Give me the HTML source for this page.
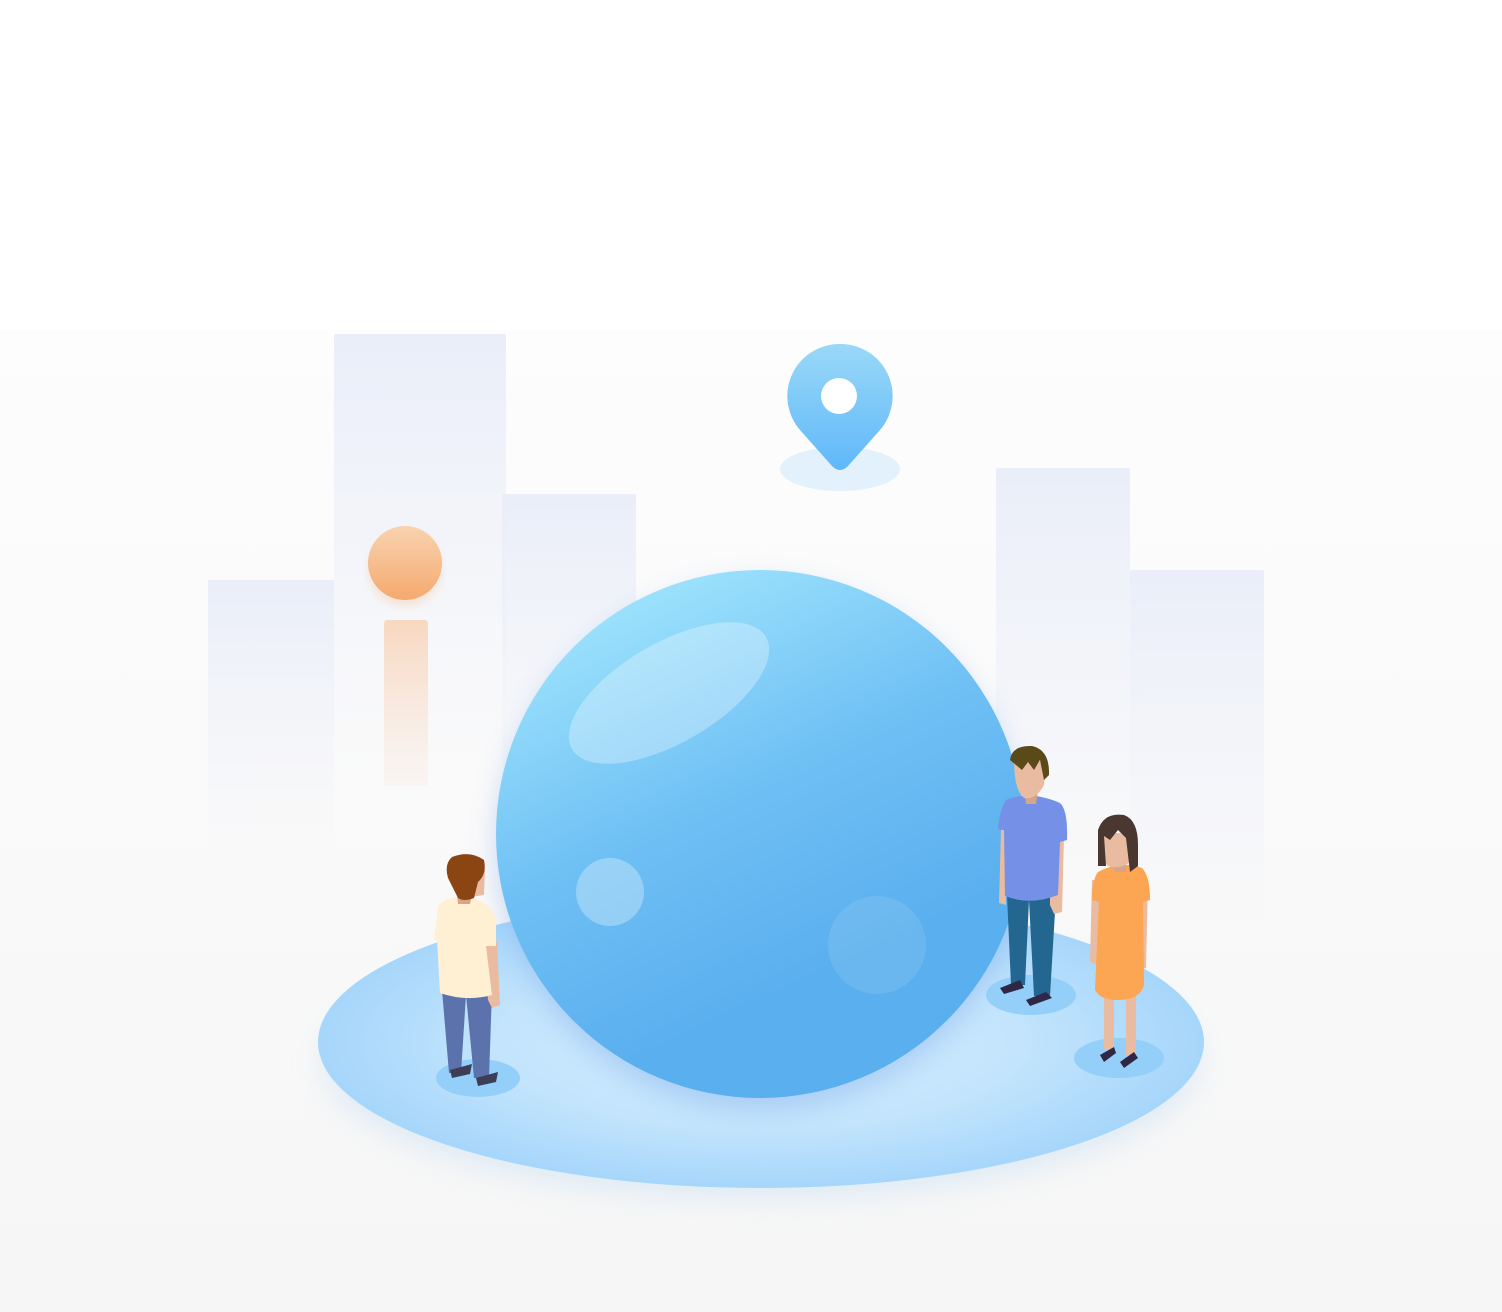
<!DOCTYPE html>
<html><head><meta charset="utf-8"><style>html,body{margin:0;padding:0;background:#fff}svg{display:block}</style></head><body>
<svg width="1502" height="1312" viewBox="0 0 1502 1312" xmlns="http://www.w3.org/2000/svg">
<defs>
<linearGradient id="bg" x1="0" y1="0" x2="0" y2="1"><stop offset="0" stop-color="#fdfdfd"/><stop offset="1" stop-color="#f6f6f6"/></linearGradient>
<linearGradient id="bld" x1="0" y1="0" x2="0" y2="1"><stop offset="0" stop-color="#eaeef9"/><stop offset="1" stop-color="#eef0f8" stop-opacity="0"/></linearGradient>
<linearGradient id="bar" x1="0" y1="0" x2="0" y2="1"><stop offset="0" stop-color="#f8d8c0"/><stop offset="1" stop-color="#f8e4d6" stop-opacity="0.2"/></linearGradient>
<linearGradient id="ob" x1="0" y1="0" x2="0" y2="1"><stop offset="0" stop-color="#f8d3b0"/><stop offset="1" stop-color="#f5a96e"/></linearGradient>
<linearGradient id="pin" x1="0" y1="0" x2="0" y2="1"><stop offset="0" stop-color="#9ad8f7"/><stop offset="1" stop-color="#5fb8fa"/></linearGradient>
<radialGradient id="plat" cx="0.5" cy="0.5" r="0.5"><stop offset="0" stop-color="#d2ecfd"/><stop offset="0.6" stop-color="#c2e4fc"/><stop offset="1" stop-color="#a6d6fb"/></radialGradient>
<linearGradient id="sph" x1="0.3" y1="0" x2="0.65" y2="0.75"><stop offset="0" stop-color="#9fe4fd"/><stop offset="0.55" stop-color="#6ebff4"/><stop offset="1" stop-color="#5aafee"/></linearGradient>
<filter id="blur" x="-20%" y="-20%" width="140%" height="140%"><feGaussianBlur stdDeviation="14"/></filter>
<filter id="blur2"><feGaussianBlur stdDeviation="6"/></filter>
</defs>
<rect x="0" y="330" width="1502" height="982" fill="url(#bg)"/>
<rect x="208" y="580" width="126" height="272" rx="2" fill="url(#bld)"/>
<rect x="334" y="334" width="172" height="450" rx="2" fill="url(#bld)"/>
<rect x="502" y="494" width="134" height="330" rx="2" fill="url(#bld)"/>
<rect x="996" y="468" width="134" height="420" rx="2" fill="url(#bld)"/>
<rect x="1130" y="570" width="134" height="358" rx="2" fill="url(#bld)"/>
<rect x="384" y="620" width="44" height="166" rx="3" fill="url(#bar)"/>
<circle cx="405" cy="570" r="34" fill="#f5b07a" opacity="0.4" filter="url(#blur2)"/>
<circle cx="405" cy="563" r="37" fill="url(#ob)"/>
<ellipse cx="840" cy="469" rx="60" ry="22" fill="#e2f1fc"/>
<path d="M840 344 A52 52 0 0 1 880 430 L848 466 Q840 474 832 466 L800 430 A52 52 0 0 1 840 344Z" fill="url(#pin)"/>
<circle cx="839" cy="396" r="18" fill="#fff"/>
<ellipse cx="761" cy="1060" rx="440" ry="140" fill="#c8dff2" opacity="0.5" filter="url(#blur)"/>
<ellipse cx="761" cy="1042" rx="443" ry="146" fill="url(#plat)"/>
<circle cx="760" cy="846" r="262" fill="#7ba7ea" opacity="0.45" filter="url(#blur)"/>
<circle cx="760" cy="834" r="264" fill="url(#sph)"/>
<ellipse cx="669" cy="693" rx="112" ry="50" transform="rotate(-30 669 693)" fill="#fff" opacity="0.3"/>
<circle cx="610" cy="892" r="34" fill="#fff" opacity="0.3"/>
<circle cx="877" cy="945" r="49" fill="#fff" opacity="0.1"/>
<ellipse cx="478" cy="1078" rx="42" ry="19" fill="#93cff8"/>
<path d="M442 990 L449 1073 L461 1073 L466 995 L474 1078 L489 1078 L492 990Z" fill="#5b72ad"/>
<path d="M450 1070 L472 1064 L470 1074 L452 1078Z" fill="#3d3d55"/>
<path d="M476 1078 L498 1072 L496 1082 L478 1086Z" fill="#3d3d55"/>
<path d="M482 940 L497 942 L500 1005 L492 1008 L488 1000Z" fill="#e9bba0"/>
<path d="M438 906 Q446 897 462 897 Q488 898 496 918 L496 946 L486 946 L492 995 Q466 1002 440 993 L437 940 L434 940Z" fill="#fff0d3"/>
<path d="M457 894 L472 894 L470 904 L458 904Z" fill="#d7a58a"/>
<path d="M468 870 L485 870 L484 895 L470 897Z" fill="#e9bba0"/>
<path d="M452 857 Q470 850 484 860 Q487 874 478 882 L474 898 Q464 902 458 898 L448 878 Q444 864 452 857Z" fill="#8b4513"/>
<ellipse cx="1031" cy="995" rx="45" ry="20" fill="#93cff8"/>
<path d="M1007 895 L1011 985 L1025 985 L1029 900 L1034 996 L1050 996 L1056 895Z" fill="#23668f"/>
<path d="M1000 988 L1020 980 L1024 988 L1004 994Z" fill="#302646"/>
<path d="M1026 1000 L1046 992 L1052 998 L1030 1006Z" fill="#302646"/>
<path d="M1001 830 L1005 830 L1006 905 L999 903Z" fill="#e9bba0"/>
<path d="M1050 835 L1064 835 L1062 912 L1054 914 L1050 905Z" fill="#e9bba0"/>
<path d="M1006 800 Q1030 790 1060 803 Q1068 810 1067 840 L1060 842 L1058 895 Q1030 906 1005 896 L1004 830 L998 829 Q1000 808 1006 800Z" fill="#7490e7"/>
<path d="M1024 790 L1038 790 L1036 804 L1026 804Z" fill="#d7a58a"/>
<path d="M1014 760 L1046 762 L1044 785 Q1036 800 1024 798 Q1014 790 1014 760Z" fill="#e9bba0"/>
<path d="M1010 760 Q1012 745 1032 746 Q1050 750 1049 775 L1044 780 L1040 760 L1034 770 L1028 762 L1022 770 L1016 765Z" fill="#5a4a1a"/>
<ellipse cx="1119" cy="1058" rx="45" ry="20" fill="#93cff8"/>
<rect x="1104" y="995" width="10" height="55" fill="#e9bba0"/>
<rect x="1126" y="995" width="10" height="60" fill="#e9bba0"/>
<path d="M1100 1055 L1114 1047 L1116 1053 L1104 1062Z" fill="#302646"/>
<path d="M1120 1062 L1134 1052 L1138 1058 L1124 1068Z" fill="#302646"/>
<path d="M1092 880 L1100 880 L1098 965 L1090 962Z" fill="#e9bba0"/>
<path d="M1138 880 L1148 880 L1146 968 L1137 970Z" fill="#e9bba0"/>
<path d="M1098 872 Q1120 860 1142 868 Q1150 876 1150 900 L1143 902 L1144 985 Q1140 1000 1118 1000 Q1100 1000 1095 990 L1099 902 L1092 900 Q1092 880 1098 872Z" fill="#fca552"/>
<path d="M1114 858 L1126 858 L1126 872 L1114 872Z" fill="#d7a58a"/>
<path d="M1100 832 L1132 834 L1130 862 Q1120 870 1108 866 Q1100 860 1100 832Z" fill="#e9bba0"/>
<path d="M1098 830 Q1104 812 1124 815 Q1138 820 1138 845 L1138 866 L1130 872 L1126 838 L1118 830 L1110 840 L1104 836 L1106 866 L1098 866Z" fill="#4a3730"/>
</svg>
</body></html>
